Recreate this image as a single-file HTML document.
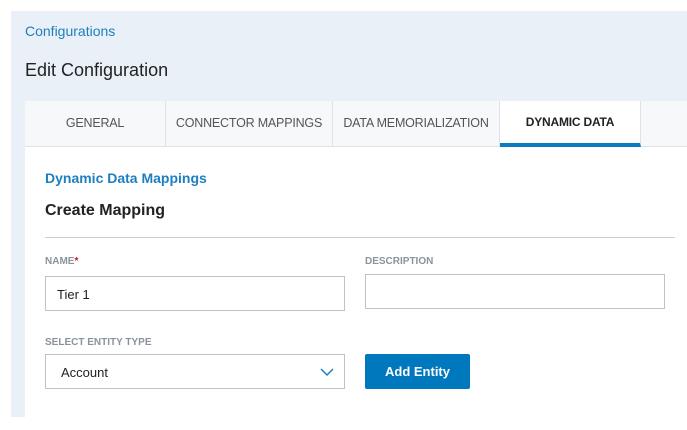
<!DOCTYPE html>
<html><head><style>
*{box-sizing:border-box;margin:0;padding:0}
body{width:687px;height:430px;background:#fff;font-family:"Liberation Sans",sans-serif;position:relative;overflow:hidden}
.bg{position:absolute;left:11px;top:11px;width:676px;height:406px;background:#e9f0f7}
.a{position:absolute;white-space:nowrap}
.card{position:absolute;left:25px;top:101px;width:662px;height:316px;background:#fff}
.tabs{position:absolute;left:25px;top:101px;width:662px;height:46px;background:#f6f8fa;border-bottom:1px solid #dde3e8}
.tab{position:absolute;top:0;height:45px;line-height:45px;text-align:center;font-size:12.5px;letter-spacing:-0.2px;color:#555;border-right:1px solid #dde3e8}
.lbl{font-size:10px;font-weight:bold;color:#8a939b}
.inp{position:absolute;border:1px solid #b9c4cc;background:#fff;font-size:13px;color:#222}
</style></head><body>
<div class="bg"></div>
<div class="a" style="left:25px;top:23px;font-size:14px;color:#1d7fbf">Configurations</div>
<div class="a" style="left:25px;top:60px;font-size:18px;color:#222">Edit Configuration</div>
<div class="card"></div>
<div class="tabs">
<div class="tab" style="left:0;width:141px">GENERAL</div>
<div class="tab" style="left:141px;width:167px">CONNECTOR MAPPINGS</div>
<div class="tab" style="left:308px;width:167px">DATA MEMORIALIZATION</div>
<div class="tab" style="left:475px;width:141px;background:#fff;color:#222;font-weight:bold;font-size:12px;line-height:42px;border-bottom:4px solid #0a7bc0;height:46px">DYNAMIC DATA</div>
</div>
<div class="a" style="left:45px;top:170px;font-size:14px;font-weight:bold;color:#1d7fbf">Dynamic Data Mappings</div>
<div class="a" style="left:45px;top:202px;font-size:16px;font-weight:bold;color:#222">Create Mapping</div>
<div class="a" style="left:45px;top:237px;width:630px;height:1px;background:#c9d0d6"></div>
<div class="a lbl" style="left:45px;top:256px">NAME<span style="color:#c8102e">*</span></div>
<div class="a lbl" style="left:365px;top:256px">DESCRIPTION</div>
<div class="inp" style="left:45px;top:276px;width:300px;height:35px;padding:10px 0 0 11px">Tier 1</div>
<div class="inp" style="left:365px;top:274px;width:300px;height:35px"></div>
<div class="a lbl" style="left:45px;top:337px">SELECT ENTITY TYPE</div>
<div class="inp" style="left:45px;top:354px;width:300px;height:35px;padding:10px 0 0 15px">Account
<svg style="position:absolute;right:10px;top:13px" width="14" height="9" viewBox="0 0 14 9"><path d="M1 1l6 6 6-6" stroke="#1d7fbf" stroke-width="1.5" fill="none"/></svg></div>
<div class="a" style="left:365px;top:354px;width:105px;height:35px;background:#0078be;border-radius:2px;color:#fff;font-size:13px;font-weight:bold;text-align:center;line-height:35px">Add Entity</div>
</body></html>
